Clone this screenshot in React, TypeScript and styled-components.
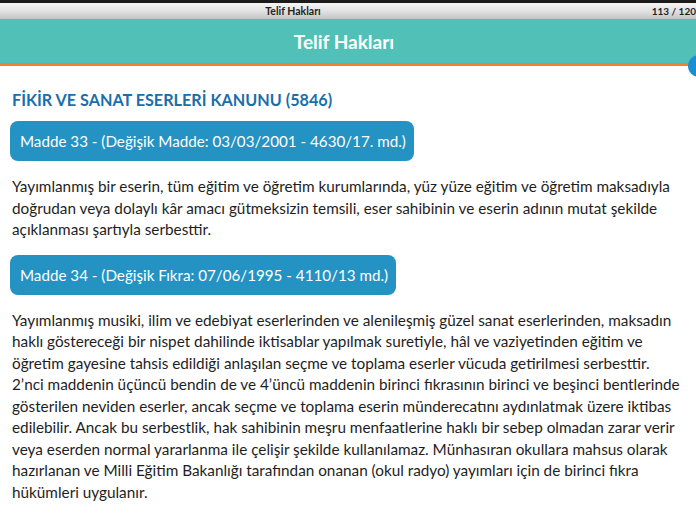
import styled, { createGlobalStyle } from 'styled-components';

const GlobalStyle = createGlobalStyle`
  html, body {
    margin: 0;
    padding: 0;
    background: #ffffff;
  }
  body {
    font-family: Lato, 'Open Sans', sans-serif;
    overflow: hidden;
  }
`;

type ArticleType = {
  title: string;
  text: string;
};

const articles: ArticleType[] = [
  {
    title: 'Madde 33 - (Değişik Madde: 03/03/2001 - 4630/17. md.)',
    text: 'Yayımlanmış bir eserin, tüm eğitim ve öğretim kurumlarında, yüz yüze eğitim ve öğretim maksadıyla doğrudan veya dolaylı kâr amacı gütmeksizin temsili, eser sahibinin ve eserin adının mutat şekilde açıklanması şartıyla serbesttir.',
  },
  {
    title: 'Madde 34 - (Değişik Fıkra: 07/06/1995 - 4110/13 md.)',
    text: 'Yayımlanmış musiki, ilim ve edebiyat eserlerinden ve alenileşmiş güzel sanat eserlerinden, maksadın haklı göstereceği bir nispet dahilinde iktisablar yapılmak suretiyle, hâl ve vaziyetinden eğitim ve öğretim gayesine tahsis edildiği anlaşılan seçme ve toplama eserler vücuda getirilmesi serbesttir. 2’nci maddenin üçüncü bendin de ve 4’üncü maddenin birinci fıkrasının birinci ve beşinci bentlerinde gösterilen neviden eserler, ancak seçme ve toplama eserin münderecatını aydınlatmak üzere iktibas edilebilir. Ancak bu serbestlik, hak sahibinin meşru menfaatlerine haklı bir sebep olmadan zarar verir veya eserden normal yararlanma ile çelişir şekilde kullanılamaz. Münhasıran okullara mahsus olarak hazırlanan ve Milli Eğitim Bakanlığı tarafından onanan (okul radyo) yayımları için de birinci fıkra hükümleri uygulanır.',
  },
];

export default function App() {
  return (
    <Page>
      <GlobalStyle />
      <StatusBar>
        <StatusTitle>Telif Hakları</StatusTitle>
        <PageCount>113 / 120</PageCount>
      </StatusBar>
      <Header>
        <HeaderTitle>Telif Hakları</HeaderTitle>
        <MenuDot />
      </Header>
      <Content>
        <LawTitle>FİKİR VE SANAT ESERLERİ KANUNU (5846)</LawTitle>
        {articles.map((article) => (
          <Article key={article.title}>
            <ArticleBadge>{article.title}</ArticleBadge>
            <Paragraph>{article.text}</Paragraph>
          </Article>
        ))}
      </Content>
    </Page>
  );
}

const Page = styled.div`
  width: 696px;
  height: 520px;
  background: #ffffff;
`;

const StatusBar = styled.div`
  position: relative;
  height: 16px;
  padding-right: 110px;
  border-top: 3px solid #1c1c1c;
  background: linear-gradient(#f6f6f6, #e2e2e2 50%, #c4c4c4);
  display: flex;
  align-items: center;
  justify-content: center;
`;

const StatusTitle = styled.span`
  font-size: 10.5px;
  font-weight: 700;
  color: #1f1f1f;
`;

const PageCount = styled.span`
  position: absolute;
  right: 0;
  top: 2px;
  font-size: 10px;
  font-weight: 700;
  color: #1f1f1f;
`;

const Header = styled.div`
  position: relative;
  height: 44px;
  padding-right: 8px;
  background: #51c1b7;
  border-bottom: 3px solid #f47f30;
  display: flex;
  align-items: center;
  justify-content: center;
`;

const HeaderTitle = styled.h1`
  margin: 0;
  font-size: 19px;
  font-weight: 700;
  color: #ffffff;
`;

const MenuDot = styled.span`
  position: absolute;
  right: -14px;
  top: 36px;
  width: 22px;
  height: 22px;
  border-radius: 50%;
  background: #1b8fd2;
`;

const Content = styled.div`
  padding: 24px 12px 0 12px;
  display: flex;
  flex-direction: column;
`;

const LawTitle = styled.h2`
  margin: 0 0 11px 0;
  font-size: 16.2px;
  line-height: 20px;
  font-weight: 700;
  color: #1a6fab;
`;

const Article = styled.section`
  display: flex;
  flex-direction: column;
  align-items: flex-start;
`;

const ArticleBadge = styled.div`
  margin-left: -2px;
  padding: 10px 8px 10px 10px;
  border-radius: 8px;
  background: #2492c2;
  color: #ffffff;
  font-size: 15.2px;
  line-height: 20px;
`;

const Paragraph = styled.p`
  margin: 15px 0 14px 0;
  font-size: 15.3px;
  line-height: 21.5px;
  color: #1e1e1e;
`;
